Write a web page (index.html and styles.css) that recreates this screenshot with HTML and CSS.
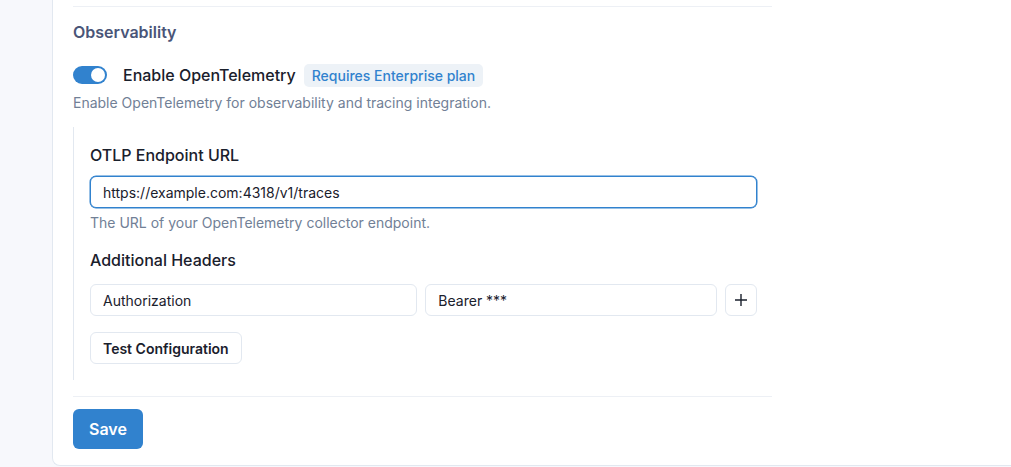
FILE: index.html
```html
<!DOCTYPE html>
<html lang="en">
<head>
  <meta charset="UTF-8" />
  <title>Settings</title>
  <meta name="viewport" content="width=device-width, initial-scale=1.0" />
  <link rel="stylesheet" href="styles.css">
</head>
<body>
  <div class="layout">
    <!-- left rail -->
    <div class="rail"></div>

    <!-- settings panel -->
    <div class="panel">
      <div class="content">
        <div class="divider top"></div>

        <h3 class="section-title">Observability</h3>

        <div class="switch-row">
          <label class="switch">
            <input type="checkbox" checked />
            <span class="track"><span class="thumb"></span></span>
          </label>
          <span class="switch-label">Enable OpenTelemetry</span>
          <span class="badge">Requires Enterprise plan</span>
        </div>
        <p class="hint">Enable OpenTelemetry for observability and tracing integration.</p>

        <!-- nested config -->
        <div class="nested">
          <label class="field-label" for="endpoint">OTLP Endpoint URL</label>
          <input class="input focused" type="text" id="endpoint" value="https://example.com:4318/v1/traces" />
          <p class="hint small-gap">The URL of your OpenTelemetry collector endpoint.</p>

          <div class="field-label headers-label">Additional Headers</div>
          <div class="header-row">
            <input class="input key" type="text" value="Authorization" />
            <input class="input value" type="text" value="Bearer ***" />
            <button class="icon-btn" type="button" aria-label="Add header">
              <svg width="14" height="14" viewBox="0 0 14 14">
                <path d="M7 1v12M1 7h12" stroke="#1a202c" stroke-width="1.4" fill="none" />
              </svg>
            </button>
          </div>

          <button class="btn-outline" type="button">Test Configuration</button>
        </div>

        <div class="divider bottom"></div>

        <button class="btn-primary" type="submit">Save</button>
      </div>
    </div>
  </div>
</body>
</html>
```

FILE: styles.css
```css
* {
  box-sizing: border-box;
}

body {
  margin: 0;
  font-family: Inter, "Noto Sans", sans-serif;
  background-color: #f7f8fc;
  color: #1a202c;
  height: 100vh;
  overflow: hidden;
}

.layout {
  display: flex;
  height: 466px;
}

.rail {
  width: 52px;
  flex-shrink: 0;
}

.panel {
  flex: 1;
  background-color: #fff;
  border-left: 1px solid #e2e8f0;
  border-bottom: 1px solid #e2e8f0;
  border-bottom-left-radius: 8px;
  padding: 6px 20px 0;
}

.content {
  width: 699px;
}

.divider {
  height: 1px;
  background-color: #edf0f5;
}

.section-title {
  margin: 13px 0 0;
  font-size: 16px;
  line-height: 24px;
  font-weight: 600;
  color: #4a5578;
}

.switch-row {
  display: flex;
  align-items: center;
  height: 24px;
  margin-top: 19px;
}

.switch input {
  display: none;
}

.track {
  display: flex;
  align-items: center;
  justify-content: flex-end;
  width: 34px;
  height: 18px;
  padding: 2px;
  border-radius: 9px;
  background-color: #3182ce;
}

.thumb {
  width: 14px;
  height: 14px;
  border-radius: 50%;
  background-color: #fff;
}

.switch-label {
  margin-left: 16px;
  font-size: 16px;
  font-weight: 500;
}

.badge {
  margin-left: 8px;
  padding: 0 8px;
  height: 23px;
  line-height: 23px;
  font-size: 14px;
  font-weight: 500;
  color: #3182ce;
  background-color: #edf2f7;
  border-radius: 5px;
}

.hint {
  margin: 6px 0 0;
  font-size: 14px;
  line-height: 20px;
  color: #718096;
}

.nested {
  margin-top: 14px;
  border-left: 1px solid #e2e8f0;
  padding: 16px 15px 16px 16px;
  display: flex;
  flex-direction: column;
  align-items: flex-start;
}

.field-label {
  display: block;
  font-size: 16px;
  line-height: 24px;
  font-weight: 500;
  margin-bottom: 9px;
}

.input {
  width: 100%;
  height: 32px;
  padding: 0 12px;
  border: 1px solid #e2e8f0;
  border-radius: 6px;
  font-family: inherit;
  font-size: 14px;
  color: #1a202c;
  background-color: #fff;
  outline: none;
}

.input.focused {
  border-color: #3182ce;
  box-shadow: 0 0 0 0.5px #3182ce;
}

.small-gap {
  margin-top: 5px;
}

.headers-label {
  margin-top: 15px;
  margin-bottom: 12px;
}

.header-row {
  display: flex;
  gap: 8px;
  width: 100%;
}

.header-row .input {
  min-width: 0;
  flex-basis: 0;
}

.header-row .key {
  flex-grow: 329;
}

.header-row .value {
  flex-grow: 290;
}

.icon-btn {
  width: 32px;
  height: 32px;
  flex-shrink: 0;
  display: flex;
  align-items: center;
  justify-content: center;
  background-color: #fff;
  border: 1px solid #e2e8f0;
  border-radius: 6px;
  padding: 0;
  cursor: pointer;
}

.btn-outline {
  margin-top: 16px;
  height: 32px;
  padding: 0 12px;
  background-color: #fff;
  border: 1px solid #e2e8f0;
  border-radius: 6px;
  font-family: inherit;
  font-size: 14px;
  font-weight: 600;
  color: #1a202c;
  cursor: pointer;
}

.divider.bottom {
  margin-top: 16px;
}

.btn-primary {
  margin-top: 12px;
  height: 40px;
  padding: 0 16px;
  background-color: #3182ce;
  border: none;
  border-radius: 6px;
  font-family: inherit;
  font-size: 16px;
  font-weight: 600;
  color: #fff;
  cursor: pointer;
}
```
